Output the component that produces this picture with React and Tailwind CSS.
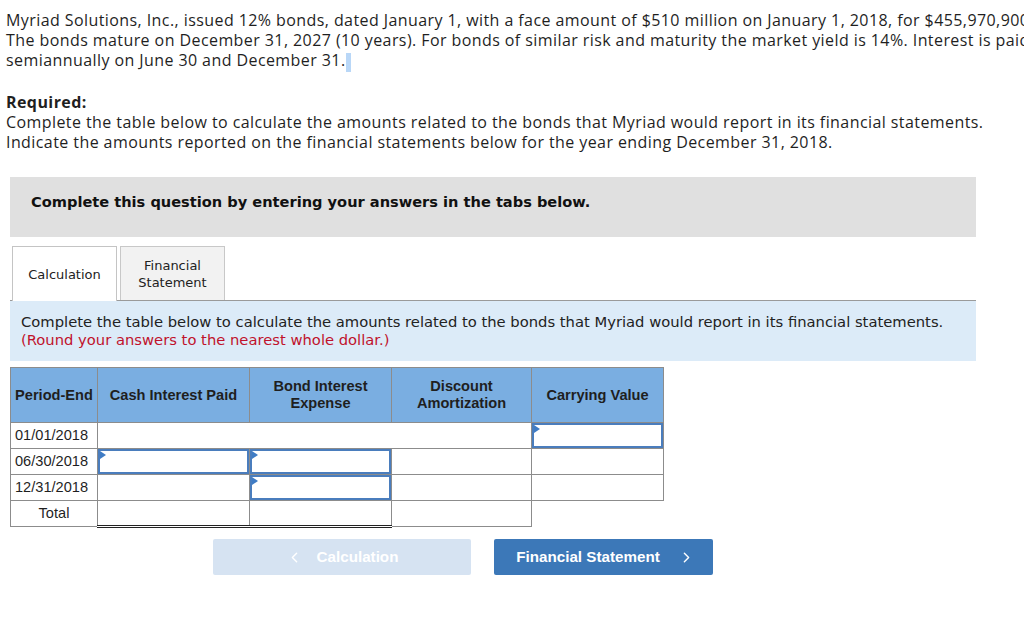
import { ChevronLeft, ChevronRight } from "lucide-react";

const body = { fontFamily: '"Open Sans", Arial, sans-serif' };

// small blue marker in the top-left corner of an answer cell
const InputCell = () => (
  <div className="relative h-full w-full border-2 border-[#4a7dbd] bg-white">
    <span className="absolute left-0 top-0 h-0 w-0 border-y-[4px] border-l-[6px] border-y-transparent border-l-[#3f7cc5]" />
  </div>
);

const th = "border border-[#8c8c8c] bg-[#7aaee1] text-[14.6px] font-bold leading-[17px] text-[#1f1f1f] text-center";
const td = "border border-[#8c8c8c] h-[26px] p-0";

export default function App() {
  return (
    <div className="w-[1024px] h-[618px] overflow-hidden bg-white text-[#1f1f1f]">
      {/* Question text */}
      <div className="pl-[6px] pt-[10px] text-[16px] leading-[20.2px] tracking-[0.42px] whitespace-nowrap" style={body}>
        <p>Myriad Solutions, Inc., issued 12% bonds, dated January 1, with a face amount of $510 million on January 1, 2018, for $455,970,900.</p>
        <p>The bonds mature on December 31, 2027 (10 years). For bonds of similar risk and maturity the market yield is 14%. Interest is paid</p>
        <p>
          semiannually on June 30 and December 31.<span className="inline-block h-[19px] w-[5px] bg-[#b9d7f7] align-middle" />
        </p>
        <p className="mt-[20.2px] font-bold">Required:</p>
        <p>Complete the table below to calculate the amounts related to the bonds that Myriad would report in its financial statements.</p>
        <p>Indicate the amounts reported on the financial statements below for the year ending December 31, 2018.</p>
      </div>

      <div className="ml-[10px] w-[966px]" style={{ fontFamily: '"DejaVu Sans", Verdana, sans-serif' }}>
        {/* Instruction banner */}
        <div className="mt-[25px] h-[60px] bg-[#e0e0e0] pl-[21px] pt-[15px] text-[14.6px] font-bold leading-[20px] text-[#111]">
          Complete this question by entering your answers in the tabs below.
        </div>

        {/* Tabs */}
        <div className="mt-[9px] flex items-end gap-[3px] border-b border-[#9a9a9a] pl-[2px]">
          <div className="-mb-px flex h-[55px] w-[105px] items-center justify-center border border-b-0 border-[#c4c4c4] bg-white text-[13px] text-[#222]">
            Calculation
          </div>
          <div className="flex h-[54px] w-[105px] flex-col items-center justify-center border border-b-0 border-[#c8c8c8] bg-[#f2f2f2] text-[13px] leading-[17px] text-[#222]">
            <span>Financial</span>
            <span>Statement</span>
          </div>
        </div>

        {/* Tab instructions */}
        <div className="h-[60px] bg-[#dcebf8] pl-[11px] pt-[12px] text-[14.75px] leading-[18px] text-[#222]">
          <p>Complete the table below to calculate the amounts related to the bonds that Myriad would report in its financial statements.</p>
          <p className="text-[#c0122c]">(Round your answers to the nearest whole dollar.)</p>
        </div>
      </div>

      {/* Answer table */}
      <table
        className="ml-[10px] mt-[6px] border-collapse text-[14.6px]"
        style={{ fontFamily: '"Liberation Sans", Arial, sans-serif' }}
      >
        <colgroup>
          <col className="w-[87px]" />
          <col className="w-[152px]" />
          <col className="w-[142px]" />
          <col className="w-[140px]" />
          <col className="w-[132px]" />
        </colgroup>
        <thead>
          <tr className="h-[55px]">
            <th className={th}>Period-End</th>
            <th className={th}>Cash Interest Paid</th>
            <th className={th}>
              Bond Interest
              <br />
              Expense
            </th>
            <th className={th}>
              Discount
              <br />
              Amortization
            </th>
            <th className={th}>Carrying Value</th>
          </tr>
        </thead>
        <tbody className="text-[#1f1f1f]">
          <tr>
            <td className={`${td} pl-[4px]`}>01/01/2018</td>
            <td className={td} colSpan={3} />
            <td className={td}>
              <InputCell />
            </td>
          </tr>
          <tr>
            <td className={`${td} pl-[4px]`}>06/30/2018</td>
            <td className={td}>
              <InputCell />
            </td>
            <td className={td}>
              <InputCell />
            </td>
            <td className={td} />
            <td className={td} />
          </tr>
          <tr>
            <td className={`${td} pl-[4px]`}>12/31/2018</td>
            <td className={td} />
            <td className={td}>
              <InputCell />
            </td>
            <td className={td} />
            <td className={td} />
          </tr>
          <tr>
            <td className={`${td} text-center`}>Total</td>
            <td className={`${td} border-b-[3px] border-b-[#222] [border-bottom-style:double]`} />
            <td className={`${td} border-b-[3px] border-b-[#222] [border-bottom-style:double]`} />
            <td className={td} />
            <td className="border-0 border-t border-[#8c8c8c]" />
          </tr>
        </tbody>
      </table>

      {/* Navigation */}
      <div
        className="ml-[213px] mt-[11px] flex gap-[23px] text-[15.2px] font-bold text-white"
        style={{ fontFamily: '"Liberation Sans", Arial, sans-serif' }}
      >
        <button className="flex h-[36px] w-[258px] items-center justify-center gap-[14px] rounded-[2px] bg-[#d6e3f2]">
          <ChevronLeft size={17} strokeWidth={2} />
          <span>Calculation</span>
        </button>
        <button className="flex h-[36px] w-[219px] items-center justify-center gap-[18px] rounded-[2px] bg-[#3c78b8] pl-[4px]">
          <span>Financial Statement</span>
          <ChevronRight size={17} strokeWidth={2} />
        </button>
      </div>
    </div>
  );
}
